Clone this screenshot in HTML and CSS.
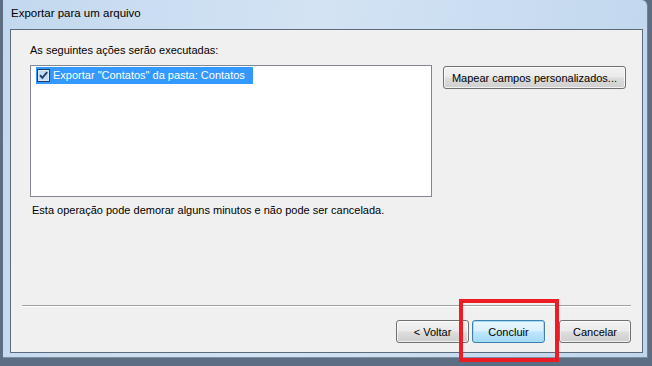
FILE: index.html
```html
<!DOCTYPE html>
<html lang="pt">
<head>
    <meta charset="utf-8">
    <link rel="stylesheet" href="styles.css">
</head>
<body>
<div class="window">
    <div class="titlebar">Exportar para um arquivo</div>
    <div class="client">
        <p class="label">As seguintes ações serão executadas:</p>
        <div class="row">
            <div class="listbox">
                <div class="item">
                    <span class="check">
                        <svg width="13" height="13" viewBox="0 0 13 13">
                            <rect x="0.5" y="0.5" width="12" height="12" fill="#dbe9f9" stroke="#1c3f6e"/>
                            <rect x="2" y="2" width="9" height="9" fill="#c6dcf4"/>
                            <path d="M3 6.2 L5.3 8.8 L10.2 3.2" fill="none" stroke="#1b3c66" stroke-width="1.8"/>
                        </svg>
                    </span>
                    <span class="item-text">Exportar "Contatos" da pasta: Contatos</span>
                </div>
            </div>
            <button class="btn btn-map">Mapear campos personalizados...</button>
        </div>
        <p class="note">Esta operação pode demorar alguns minutos e não pode ser cancelada.</p>
        <div class="spacer"></div>
        <div class="separator"></div>
        <div class="footer">
            <button class="btn">&lt; Voltar</button>
            <button class="btn btn-default">Concluir</button>
            <button class="btn btn-cancel">Cancelar</button>
        </div>
    </div>
    <div class="highlight"></div>
</div>
</body>
</html>
```

FILE: styles.css
```css
* {
    margin: 0;
    padding: 0;
    box-sizing: border-box;
}
body {
    width: 652px;
    height: 366px;
    overflow: hidden;
    background: #5d6e82;
    font: 11px "Liberation Sans", Arial, sans-serif;
    color: #000;
}
.window {
    position: relative;
    margin-left: 3px;
    width: 645px;
    height: 358px;
    padding: 0 4px 4px 7px;
    border-radius: 0 6px 0 0;
    background: linear-gradient(100deg, #c3d8ee 0%, #d3e3f4 45%, #c0d6ed 100%);
    border-right: 1px solid #6f8296;
    border-bottom: 1px solid #7d8fa3;
    display: flex;
    flex-direction: column;
}
.titlebar {
    height: 29px;
    padding: 7px 0 0 1px;
    font-size: 11.5px;
    color: #000;
}
.client {
    flex: 1;
    background: #f0f0f0;
    border: 1px solid #5c6b7c;
    display: flex;
    flex-direction: column;
    padding: 12px 11px 9px 19px;
}
.label {
    line-height: 16px;
    height: 23px;
}
.row {
    display: flex;
    align-items: flex-start;
    gap: 11px;
}
.listbox {
    width: 402px;
    height: 132px;
    background: #fff;
    border: 1px solid #828790;
    padding: 1px 5px;
}
.item {
    display: inline-flex;
    align-items: center;
    height: 17px;
    background: #3399ff;
    color: #fff;
    padding: 0 8px 0 1px;
}
.check {
    display: flex;
    width: 16px;
}
.item-text {
    line-height: 17px;
    white-space: nowrap;
}
.btn {
    height: 23px;
    width: 73px;
    font: inherit;
    color: #000;
    white-space: nowrap;
    border: 1px solid #707070;
    border-radius: 3px;
    background: linear-gradient(#f2f2f2 0%, #ebebeb 48%, #dddddd 52%, #cfcfcf 100%);
    box-shadow: inset 0 0 0 1px rgba(255, 255, 255, 0.7);
}
.btn-map {
    width: 183px;
    margin-top: 1px;
}
.btn-default {
    border-color: #3c7fb1;
    background: linear-gradient(#eaf6fd 0%, #d9f0fc 48%, #bee6fd 52%, #a7d9f5 100%);
    box-shadow: inset 0 0 0 1px #a3dcf7;
}
.note {
    margin-top: 5px;
    padding-left: 2px;
    line-height: 16px;
}
.spacer {
    flex: 1;
}
.separator {
    margin-left: -8px;
    height: 2px;
    border-top: 1px solid #a0a0a0;
    border-bottom: 1px solid #fff;
}
.footer {
    display: flex;
    justify-content: flex-end;
    gap: 3px;
    margin-top: 13px;
}
.btn-cancel {
    width: 72px;
    margin-left: 11px;
}
.highlight {
    position: absolute;
    left: 456px;
    top: 299px;
    width: 100px;
    height: 63px;
    border: 4px solid #ed1c24;
}
```
